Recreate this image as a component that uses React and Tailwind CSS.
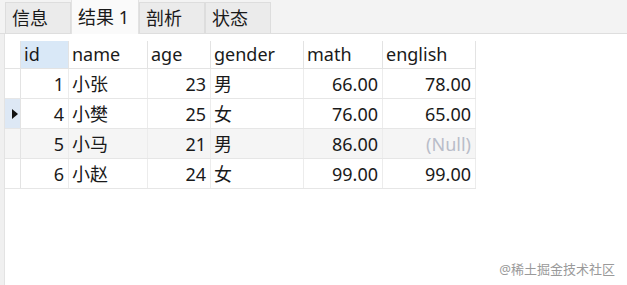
import React from 'react';

const cols = [
  { key: 'id', label: 'id', w: 'w-[48px]', num: true },
  { key: 'name', label: 'name', w: 'w-[79px]' },
  { key: 'age', label: 'age', w: 'w-[63px]', num: true },
  { key: 'gender', label: 'gender', w: 'w-[93px]' },
  { key: 'math', label: 'math', w: 'w-[79px]', num: true },
  { key: 'english', label: 'english', w: 'w-[93px]', num: true },
];

const rows = [
  { id: 1, name: '小张', age: 23, gender: '男', math: '66.00', english: '78.00' },
  { id: 4, name: '小樊', age: 25, gender: '女', math: '76.00', english: '65.00', current: true },
  { id: 5, name: '小马', age: 21, gender: '男', math: '86.00', english: null, alt: true },
  { id: 6, name: '小赵', age: 24, gender: '女', math: '99.00', english: '99.00' },
];

const tabs = ['信息', '结果 1', '剖析', '状态'];

const App = () => {
  return (
    <div
      className="w-[627px] h-[285px] bg-white relative overflow-hidden text-[#1a1a1a]"
      style={{ fontFamily: '"Noto Sans", "Noto Sans CJK SC", sans-serif' }}
    >
      {/* tab strip */}
      <div className="h-[34px] bg-[#f3f3f3] border-b border-[#dedede] flex items-end pl-[5px]">
        {tabs.map((t, i) => (
          <div
            key={t}
            className={
              i === 1
                ? 'w-[68px] h-[34px] bg-[#fafafa] border-x border-[#e2e2e2] text-[18px] leading-none flex items-center pl-[6px] -mb-px'
                : 'w-[66px] h-[31px] bg-[#ebebeb] border-x border-t border-[#dddddd] text-[18px] leading-none flex items-center pl-[6px]'
            }
          >
            {t}
          </div>
        ))}
      </div>

      <div className="flex h-[251px]">
        <div className="w-[5px] bg-[#f0f0f0] border-r border-[#e3e3e3]" />
        <div className="pt-[7px]">
          {/* header */}
          <div className="flex h-[28px] border-b border-[#e3e3e3] text-[18px] leading-none">
            <div className="w-[16px] border-r border-[#e3e3e3]" />
            {cols.map((c) => (
              <div
                key={c.key}
                className={`${c.w} border-r border-[#e3e3e3] flex items-center pl-[3px] pb-[1px] ${
                  c.key === 'id' ? 'bg-[#d9e8f7]' : ''
                }`}
              >
                {c.label}
              </div>
            ))}
          </div>
          {rows.map((r) => (
            <div
              key={r.id}
              className={`flex h-[30px] border-b border-[#e6e6e6] text-[18px] leading-none ${
                r.alt ? 'bg-[#f5f5f5]' : ''
              }`}
            >
              <div
                className={`w-[16px] border-r border-[#e3e3e3] flex items-center pl-[7px] ${
                  r.current ? 'bg-[#dde8f5]' : ''
                }`}
              >
                {r.current && (
                  <svg width="6" height="10" viewBox="0 0 6 10">
                    <path d="M0 0 L6 5 L0 10 Z" fill="#111" />
                  </svg>
                )}
              </div>
              {cols.map((c) => {
                const v = r[c.key];
                const isNull = v === null;
                return (
                  <div
                    key={c.key}
                    className={`${c.w} border-r border-[#ececec] flex items-center ${
                      c.num ? 'justify-end pr-[4px]' : 'pl-[3px]'
                    } ${isNull ? 'text-[#b9bdc9]' : ''}`}
                  >
                    {isNull ? '(Null)' : v}
                  </div>
                );
              })}
            </div>
          ))}
        </div>
      </div>

      <div className="absolute right-[12px] bottom-[9px] text-[13px] leading-none text-[#9a9a9a]">
        @稀土掘金技术社区
      </div>
    </div>
  );
};

export default App;
